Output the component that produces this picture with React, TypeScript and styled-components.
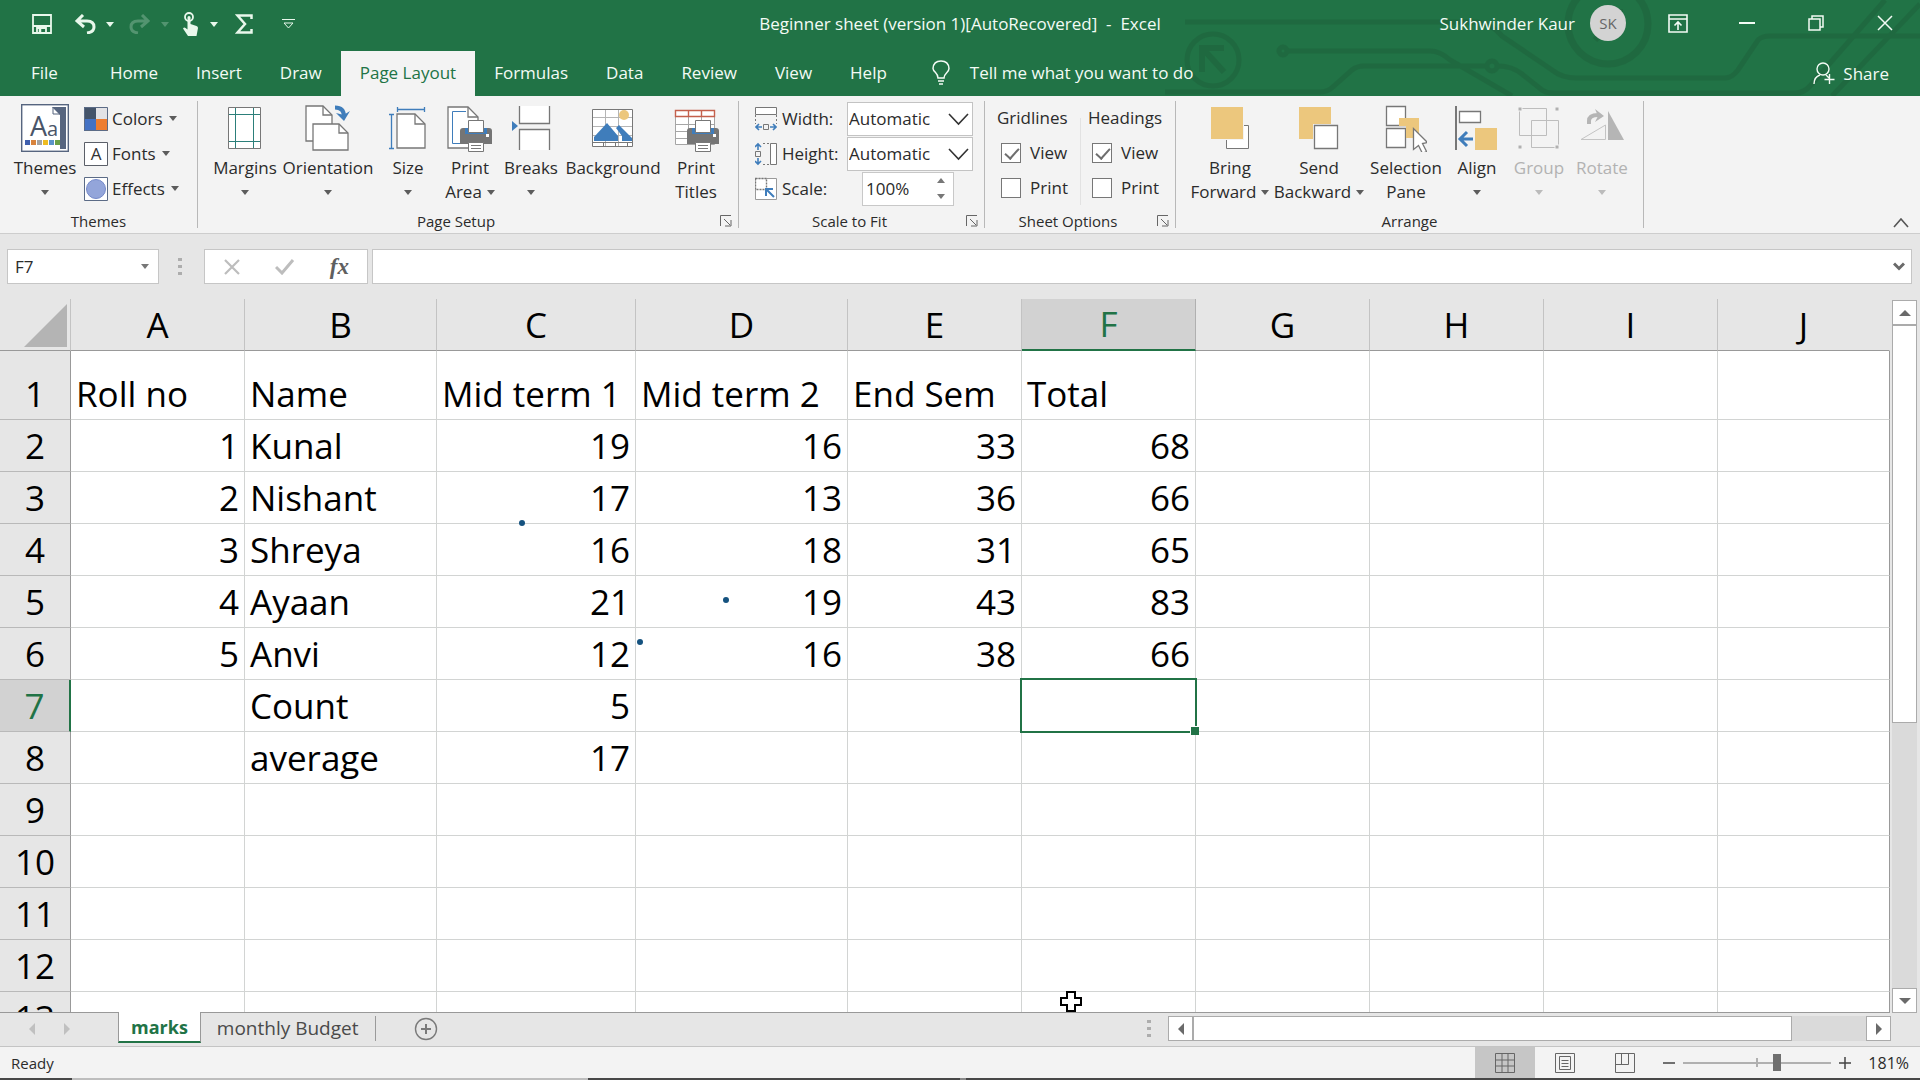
import React from "react";
import styled, { createGlobalStyle, css } from "styled-components";

const green = "#217346";
const ink = "#2b2b2b";
const grey = "#777777";
const blue = "#3f7dbb";
const gold = "#ecc77d";

const GlobalStyle = createGlobalStyle`
  * { box-sizing: border-box; }
  html, body { margin: 0; height: 100%; overflow: hidden; }
  body { font-family: "Open Sans", "Noto Sans", sans-serif; font-size: 17px; color: ${ink}; }
  button, input, select { font: inherit; color: inherit; margin: 0; padding: 0; border: 0; background: none; }
  svg { display: block; flex: none; }
`;

const Shell = styled.div`
  display: flex;
  flex-direction: column;
  height: 100vh;
  background: #e6e6e6;
`;

/* ---------- title bar and tabs ---------- */
const Banner = styled.header`
  position: relative;
  background: ${green};
  color: #f3fbf5;
`;
const Circuit = styled.svg`
  position: absolute;
  right: 0;
  top: 0;
`;
const TitleBar = styled.div`
  position: relative;
  display: grid;
  grid-template-columns: 1fr auto 1fr;
  align-items: center;
  height: 48px;
`;
const QuickAccess = styled.div`
  display: flex;
  align-items: center;
  padding-left: 32px;
`;
const QuickButton = styled.button<{ $gap: number; $dim?: boolean }>`
  display: flex;
  align-items: center;
  gap: 10px;
  margin-right: ${(p) => p.$gap}px;
  opacity: ${(p) => (p.$dim ? 0.25 : 1)};
`;
const DocTitle = styled.h1`
  margin: 0;
  padding-bottom: 2px;
  font-size: 17px;
  font-weight: 400;
  white-space: pre;
`;
const Account = styled.div`
  display: flex;
  align-items: center;
  justify-content: flex-end;
  padding: 0 1px 2px 0;
  white-space: nowrap;
`;
const Avatar = styled.span`
  display: grid;
  place-items: center;
  width: 36px;
  height: 36px;
  margin: 0 17px 0 15px;
  border-radius: 50%;
  background: #d3d3d3;
  color: #666;
  font-size: 15px;
`;
const WindowButton = styled.button`
  display: grid;
  place-items: center;
  width: 69px;
  height: 46px;
`;
const Tabs = styled.nav`
  position: relative;
  display: flex;
  align-items: flex-end;
  height: 48px;
`;
const Tab = styled.button<{ $active?: boolean; $wide?: boolean }>`
  height: 45px;
  padding: ${(p) => (p.$wide ? "0 33px 2px 31px" : "0 19px 2px")};
  white-space: nowrap;
  ${(p) => p.$active && css`background: #f3f3f3; color: ${green};`}
`;
const TellMe = styled.button`
  display: flex;
  align-items: center;
  gap: 20px;
  height: 45px;
  padding: 0 0 2px 26px;
`;
const Share = styled.button`
  display: flex;
  align-items: center;
  gap: 8px;
  height: 45px;
  margin-left: auto;
  padding-right: 31px;
`;

/* ---------- ribbon ---------- */
const Ribbon = styled.section`
  position: relative;
  display: flex;
  height: 138px;
  padding-top: 5px;
  background: #f3f3f3;
  border-bottom: 1px solid #cdcdcd;
`;
const Group = styled.div<{ $width: number }>`
  display: flex;
  flex-direction: column;
  width: ${(p) => p.$width}px;
  height: 127px;
  border-right: 1px solid #b8b8b8;
`;
const GroupBody = styled.div<{ $pad: number }>`
  display: flex;
  flex: none;
  height: 106px;
  padding-left: ${(p) => p.$pad}px;
`;
const GroupFooter = styled.div`
  display: flex;
  flex: none;
  align-items: center;
  font-size: 15px;
  line-height: 28px;
  text-align: center;
`;
const GroupTitle = styled.span`
  flex: 1;
`;
const Launcher = styled.button`
  display: grid;
  place-items: center;
  width: 24px;
`;
const BigButton = styled.button<{ $width: number }>`
  display: flex;
  flex-direction: column;
  align-items: center;
  width: ${(p) => p.$width}px;
  padding-top: 3px;
  line-height: 24px;
  white-space: nowrap;
  &:disabled { color: #b2b2b2; }
`;
const IconBox = styled.span`
  display: block;
  height: 52px;
`;
const SecondLine = styled.span`
  display: flex;
  align-items: center;
  gap: 5px;
  height: 24px;
`;
const Stack = styled.div`
  display: flex;
  flex-direction: column;
`;
const SmallButton = styled.button`
  display: flex;
  align-items: center;
  gap: 4px;
  height: 35px;
  padding-left: 4px;
  & > svg:last-child { margin-left: 2px; }
`;
const FieldRow = styled.div`
  display: flex;
  align-items: center;
  height: 35px;
`;
const FieldLabel = styled.label`
  display: flex;
  align-items: center;
  gap: 5px;
  width: 92px;
`;
const SelectBox = styled.span`
  position: relative;
  display: block;
`;
const Select = styled.select`
  appearance: none;
  width: 126px;
  height: 34px;
  padding-left: 1px;
  border: 1px solid #c3c3c3;
  background: #fff;
`;
const SelectArrow = styled.svg`
  position: absolute;
  right: 4px;
  top: 11px;
  pointer-events: none;
`;
const Spin = styled.span`
  display: flex;
  width: 92px;
  height: 34px;
  margin-left: 15px;
  border: 1px solid #c8c8c8;
  background: #fff;
`;
const SpinInput = styled.input`
  width: 65px;
  padding-left: 3px;
`;
const SpinButton = styled.button`
  display: grid;
  place-items: center;
  width: 25px;
  height: 16px;
`;
const CheckGroup = styled.fieldset<{ $width: number; $line?: boolean }>`
  width: ${(p) => p.$width}px;
  height: 104px;
  margin: 0;
  padding: 0 0 0 ${(p) => (p.$line ? 12 : 7)}px;
  border: 0;
  border-right: ${(p) => (p.$line ? "1px solid #e2e2e2" : "0")};
`;
const Legend = styled.legend`
  padding: 0;
  height: 34px;
  line-height: 34px;
`;
const Check = styled.label`
  display: flex;
  align-items: center;
  gap: 9px;
  height: 35px;
  padding-left: 4px;
`;
const CheckInput = styled.input`
  appearance: none;
  position: relative;
  width: 20px;
  height: 20px;
  border: 1px solid #777;
  background: #fff;
  &:checked::after {
    content: "";
    position: absolute;
    left: 6px;
    top: 1px;
    width: 6px;
    height: 12px;
    border: solid #6e6e6e;
    border-width: 0 2px 2px 0;
    transform: rotate(42deg);
  }
`;
const Collapse = styled.button`
  align-self: flex-end;
  margin: 0 11px 5px auto;
`;

/* ---------- formula bar ---------- */
const FormulaBar = styled.section`
  display: flex;
  align-items: center;
  height: 65px;
  padding: 0 8px 0 7px;
`;
const NameBox = styled.div`
  display: flex;
  align-items: center;
  width: 152px;
  height: 35px;
  padding: 0 9px 0 7px;
  border: 1px solid #c6c6c6;
  background: #fff;
`;
const NameInput = styled.input`
  width: 100%;
  min-width: 0;
`;
const Dots = styled.span<{ $margin: string }>`
  width: 4px;
  height: 18px;
  margin: ${(p) => p.$margin};
  background: repeating-linear-gradient(#adadad 0 3px, transparent 3px 7px);
`;
const FormulaTools = styled.div`
  display: flex;
  align-items: center;
  justify-content: space-between;
  width: 164px;
  height: 35px;
  margin-right: 4px;
  padding: 0 18px;
  border: 1px solid #c6c6c6;
  background: #fff;
`;
const FxButton = styled.button`
  font: italic 700 23px/28px "Liberation Serif", serif;
  color: #5f5f5f;
`;
const FormulaField = styled.div`
  display: flex;
  align-items: center;
  flex: 1;
  height: 35px;
  padding-right: 6px;
  border: 1px solid #c6c6c6;
  background: #fff;
`;
const FormulaInput = styled.input`
  flex: 1;
  height: 100%;
  padding-left: 6px;
`;

/* ---------- sheet ---------- */
const Workspace = styled.main`
  display: flex;
  flex: 1;
  min-height: 0;
`;
const Sheet = styled.div`
  position: relative;
  flex: 1;
  overflow: hidden;
  border-bottom: 1px solid #999;
`;
const Grid = styled.table`
  table-layout: fixed;
  width: 100%;
  border-collapse: separate;
  border-spacing: 0;
  background: #fff;
  font-size: 35px;
  line-height: 50px;
  color: #000;
`;
const ColHead = styled.th<{ $on?: boolean }>`
  height: 52px;
  padding: 0;
  font-weight: 400;
  background: ${(p) => (p.$on ? "#d2d2d2" : "#e6e6e6")};
  color: ${(p) => (p.$on ? green : "inherit")};
  border-bottom: ${(p) => (p.$on ? `2px solid ${green}` : "1px solid #999")};
  border-right: 1px solid;
  border-right-color: ${(p) => (p.$on ? "#b0b0b0" : "#c3c3c3")};
  &:last-child { border-right-color: #e6e6e6; }
`;
const Corner = styled.th`
  padding: 5px 3px 3px 24px;
  background: #e6e6e6;
  border-right: 1px solid #c3c3c3;
  border-bottom: 1px solid #999;
`;
const RowHead = styled.th<{ $on?: boolean }>`
  padding: 0;
  vertical-align: bottom;
  font-weight: 400;
  background: ${(p) => (p.$on ? "#d2d2d2" : "#e6e6e6")};
  color: ${(p) => (p.$on ? green : "inherit")};
  border-right: ${(p) => (p.$on ? `2px solid ${green}` : "1px solid #999")};
  border-bottom: 1px solid #b9b9b9;
`;
const Row = styled.tr<{ $tall?: boolean }>`
  height: ${(p) => (p.$tall ? 69 : 52)}px;
`;
const Cell = styled.td<{ $num?: boolean }>`
  position: relative;
  padding: 0 5px;
  vertical-align: bottom;
  text-align: ${(p) => (p.$num ? "right" : "left")};
  white-space: nowrap;
  border-right: 1px solid #d2d4d3;
  border-bottom: 1px solid #d2d4d3;
  &:last-child { border-right-color: #999; }
`;
const Selection = styled.div`
  position: absolute;
  inset: -2px;
  z-index: 1;
  border: 2px solid ${green};
  &::after {
    content: "";
    position: absolute;
    right: -4px;
    bottom: -4px;
    width: 8px;
    height: 8px;
    border: solid #fff;
    border-width: 1px 0 0 1px;
    background: ${green};
  }
`;
const InkDot = styled.span<{ $x: number; $y: number }>`
  position: absolute;
  left: ${(p) => p.$x}px;
  top: ${(p) => p.$y}px;
  width: 6px;
  height: 6px;
  border-radius: 50%;
  background: #15527f;
`;
const Pointer = styled.svg`
  position: absolute;
  left: 1060px;
  top: 692px;
`;

/* ---------- scroll bars ---------- */
const VScroll = styled.div`
  display: flex;
  flex-direction: column;
  width: 25px;
  margin: 1px 3px 0 2px;
  background: #dadada;
`;
const HScroll = styled.div`
  display: flex;
  width: 723px;
  height: 25px;
  margin-right: 29px;
  background: #dadada;
`;
const ScrollButton = styled.button`
  display: grid;
  place-items: center;
  flex: none;
  width: 25px;
  height: 25px;
  border: 1px solid #ababab;
  background: #fff;
`;
const Track = styled.div<{ $vertical?: boolean }>`
  display: flex;
  flex: 1;
  flex-direction: ${(p) => (p.$vertical ? "column" : "row")};
`;
const Thumb = styled.div<{ $size: number }>`
  flex: 0 0 ${(p) => p.$size}%;
  border: 1px solid #ababab;
  background: #fff;
`;

/* ---------- sheet tabs and status ---------- */
const SheetBar = styled.nav`
  display: flex;
  align-items: center;
  height: 34px;
  padding-bottom: 2px;
  border-bottom: 1px solid #c4c4c4;
`;
const SheetArrows = styled.div`
  display: flex;
  gap: 23px;
  width: 118px;
  padding-left: 26px;
`;
const SheetTab = styled.button<{ $active?: boolean }>`
  position: relative;
  align-self: flex-start;
  height: 29px;
  padding: 0 16px;
  font-size: 19px;
  line-height: 28px;
  white-space: nowrap;
  color: #4a4a4a;
  ${(p) =>
    p.$active &&
    css`
      height: 31px;
      margin-top: -1px;
      padding: 0 12px;
      font-size: 18px;
      font-weight: 700;
      color: ${green};
      background: #fff;
      border: solid #999;
      border-width: 0 1px;
      border-bottom: 2px solid ${green};
    `}
`;
const TabRule = styled.span`
  width: 1px;
  height: 25px;
  margin-right: 38px;
  background: #9a9a9a;
`;
const Spacer = styled.span`
  flex: 1;
`;
const StatusBar = styled.footer`
  display: flex;
  align-items: center;
  height: 31px;
  padding: 0 11px;
  background: #f3f3f3;
  font-size: 15px;
`;
const ViewButton = styled.button<{ $on?: boolean }>`
  display: grid;
  place-items: center;
  width: 60px;
  height: 31px;
  background: ${(p) => (p.$on ? "#c6c6c6" : "transparent")};
`;
const ZoomButton = styled.button<{ $margin: string }>`
  margin: ${(p) => p.$margin};
`;
const Zoom = styled.input`
  appearance: none;
  width: 148px;
  height: 18px;
  background:
    linear-gradient(#b0b0b0, #b0b0b0) center / 2px 9px no-repeat,
    linear-gradient(#b0b0b0, #b0b0b0) center / 100% 2px no-repeat;
  &::-webkit-slider-thumb {
    appearance: none;
    width: 8px;
    height: 17px;
    background: #6f6f6f;
  }
`;
const ZoomValue = styled.output`
  width: 58px;
  text-align: right;
  font-size: 16px;
`;
const Edge = styled.div`
  height: 2px;
  background: linear-gradient(90deg, #474747 72px, #bdbdbd 72px 588px, #474747 588px 960px, #8a8a8a 960px 966px, #474747 966px);
`;

/* ---------- icons ---------- */
const Caret = ({ color = "#5c5c5c" }: { color?: string }) => (
  <svg width="8" height="5" viewBox="0 0 8 5"><path d="M0 0h8L4 5z" fill={color} /></svg>
);

const Arrow = ({ dir, color = "#6a6a6a" }: { dir: "up" | "down" | "left" | "right"; color?: string }) => {
  const d = { up: "M0 9 6 3l6 6z", down: "M0 3h12L6 9z", left: "M9 0v12L3 6z", right: "M3 0v12l6-6z" }[dir];
  return <svg width="12" height="12" viewBox="0 0 12 12"><path d={d} fill={color} /></svg>;
};

const Page = ({ x, y, w, h, f = 9 }: { x: number; y: number; w: number; h: number; f?: number }) => (
  <g fill="#fff" stroke={grey} strokeWidth="1.3">
    <path d={`M${x} ${y}h${w - f}l${f} ${f}v${h - f}h${-w}z`} />
    <path d={`M${x + w - f} ${y}v${f}h${f}`} fill="none" />
  </g>
);

const Printer = ({ x, y }: { x: number; y: number }) => (
  <g transform={`translate(${x} ${y})`}>
    <path d="M3 8h26q3 0 3 3v13H0V11q0-3 3-3z" fill="#757575" />
    <path d="M5 8h22v6H5z" fill={blue} />
    <path d="M8.500 0.500h15v12h-15z" fill="#fff" stroke={grey} />
    <rect x="26" y="14" width="3" height="3" fill="#fff" />
    <path d="M8.500 22.500h15v9h-15z" fill="#fff" stroke={grey} />
    <path d="M11 25.500h10M11 28.500h10" stroke={grey} />
  </g>
);

const ThemesIcon = () => (
  <svg width="48" height="48" viewBox="0 0 48 48">
    <rect x="0.700" y="0.700" width="46.600" height="46.600" fill="#fff" stroke="#56657f" strokeWidth="1.400" />
    <path d="M3 3h42v42H3z" fill="#56657f" />
    <path d="M3 3h28l8 8v34H3z" fill="#fff" />
    <path d="M32 3v7h7" fill="none" stroke="#56657f" />
    <text x="9" y="32" fontSize="27" fill="#4a5568">A</text>
    <text x="26" y="32" fontSize="20" fill="#4a5568">a</text>
    {["#3f5fae", "#d8843d", "#a3a3a3", "#eebc22", "#5b93c8", "#6aa046"].map((c, i) => (
      <rect key={c} x={4 + i * 6} y="36" width="5" height="5" fill={c} />
    ))}
  </svg>
);
const ColorsIcon = () => (
  <svg width="24" height="24" viewBox="0 0 24 24">
    <path d="M0 0h12v12H0z" fill="#44546a" /><path d="M12 0h12v12H12z" fill="#e3e3e6" />
    <path d="M0 12h12v12H0z" fill="#4472c4" /><path d="M12 12h12v12H12z" fill="#ed7d31" />
    <path d="M.5.5h23v23H.5z" fill="none" stroke="#5b6b86" />
  </svg>
);
const FontsIcon = () => (
  <svg width="24" height="24" viewBox="0 0 24 24">
    <path d="M.5.5h23v23H.5z" fill="#fff" stroke="#5b5f68" />
    <text x="12" y="18" fontSize="17" textAnchor="middle" fill="#333">A</text>
  </svg>
);
const EffectsIcon = () => (
  <svg width="24" height="24" viewBox="0 0 24 24">
    <path d="M.5.5h23v23H.5z" fill="#fff" stroke="#5b6b86" />
    <circle cx="12" cy="12" r="9.500" fill="#93a5da" stroke="#7489c9" />
  </svg>
);
const MarginsIcon = () => (
  <svg width="34" height="48" viewBox="0 0 34 48">
    <path d="M.5 3.500h32v41H.5z" fill="#fff" stroke={grey} />
    <path d="M7.500 4v40M25.500 4v40M1 10.500h31M1 37.500h31" stroke="#2c7f7a" />
  </svg>
);
const OrientationIcon = () => (
  <svg width="46" height="48" viewBox="0 0 46 48">
    <Page x={1} y={2} w={26} h={35} />
    <Page x={8} y={20} w={35} h={26} />
    <path d="M30 3.500q9 0 9 9" fill="none" stroke={blue} strokeWidth="4" />
    <path d="M31 9l8 8 6-10-4 2.500-4 1z" fill={blue} />
  </svg>
);
const SizeIcon = () => (
  <svg width="38" height="48" viewBox="0 0 38 48">
    <path d="M8 5.500h28M8.500 3v5M35.500 3v5M2.500 11v33M0 10.500h5M0 44.500h5" stroke={blue} strokeWidth="1.300" />
    <Page x={8} y={10} w={28} h={34} f={10} />
  </svg>
);
const PrintAreaIcon = () => (
  <svg width="46" height="48" viewBox="0 0 46 48">
    <Page x={1} y={3} w={30} h={41} f={10} />
    <path d="M19 7.500H5.500v32H14" fill="none" stroke={blue} />
    <Printer x={13} y={16} />
  </svg>
);
const BreaksIcon = () => (
  <svg width="40" height="48" viewBox="0 0 40 48">
    <path d="M8.500 2v17.500h30V2M8.500 46V25.500h30V46" fill="#fff" stroke={grey} strokeWidth="1.300" />
    <path d="M1 17l6 5-6 5z" fill={blue} />
  </svg>
);
const BackgroundIcon = () => (
  <svg width="44" height="48" viewBox="0 0 44 48">
    <path d="M1.500 5.500h40v37h-40z" fill="#fff" stroke={grey} />
    <path d="M2 13.500h39M2 22.500h39M2 31.500h39M14.500 6v36M27.500 6v36" stroke="#b5b5b5" />
    <circle cx="33" cy="11" r="5" fill={gold} />
    <path d="M3 37V33L16 19l11 13v5z" fill={blue} /><path d="M25 24l3-3 13 13v3H31v-5z" fill={blue} />
    <path d="M12.500 38v4.500M24.500 38v4.500M36.500 38v4.500M2 38.500h39" stroke={grey} />
  </svg>
);
const PrintTitlesIcon = () => (
  <svg width="46" height="48" viewBox="0 0 46 48">
    <path d="M2.500 6.500h39v34h-39z" fill="#fff" stroke="#a5a5a5" />
    <path d="M3 20.500h38M3 27.500h38M3 34.500h38M15.500 7v33M28.500 7v33" stroke="#a5a5a5" />
    <path d="M2.500 6.500h39v6h-39zM15.500 7v6M28.500 7v6" fill="#fff" stroke="#c4604c" strokeWidth="1.400" />
    <Printer x={14} y={16} />
  </svg>
);
const BringIcon = () => (
  <svg width="40" height="48" viewBox="0 0 40 48">
    <path d="M16.500 21.500h22v23h-22z" fill="#fff" stroke={grey} />
    <path d="M0 2h34v34H0z" fill="#f3f3f3" /><path d="M1 3h32v32H1z" fill={gold} />
  </svg>
);
const SendIcon = () => (
  <svg width="40" height="48" viewBox="0 0 40 48">
    <path d="M0 3h32v32H0z" fill={gold} /><path d="M14 20h26v26H14z" fill="#f3f3f3" />
    <path d="M15.500 21.500h23v23h-23z" fill="#fff" stroke={grey} strokeWidth="1.300" />
  </svg>
);
const SelectionIcon = () => (
  <svg width="42" height="48" viewBox="0 0 42 48">
    <path d="M1.500 2.500h19v19h-19zM1.500 24.500h19v19h-19z" fill="#fff" stroke={grey} strokeWidth="1.300" />
    <path d="M14 14h20v20H21V22h-7z" fill={gold} />
    <path d="M28.500 24.500v21l5-4 4 8 4-2-4-8 5-1z" fill="#fff" stroke={grey} strokeWidth="1.300" />
  </svg>
);
const AlignIcon = () => (
  <svg width="44" height="48" viewBox="0 0 44 48">
    <path d="M1 2v44" stroke={grey} strokeWidth="2" />
    <path d="M4.500 7.500h21v11h-21z" fill="#fff" stroke={grey} strokeWidth="1.300" />
    <path d="M20 24h22v22H20z" fill={gold} />
    <path d="M18 35H6M12 28l-7 7 7 7" fill="none" stroke={blue} strokeWidth="3" />
  </svg>
);
const GroupIcon = () => (
  <svg width="44" height="48" viewBox="0 0 44 48" fill="none" stroke="#bdbdbd">
    <path d="M2.500 4.500h27v27h-27zM14.500 16.500h27v27h-27z" />
    <path d="M1 3h4v4H1zM38 3h4v4h-4zM1 41h4v4H1zM38 41h4v4h-4z" fill="#b0b0b0" stroke="#f3f3f3" />
  </svg>
);
const RotateIcon = () => (
  <svg width="44" height="48" viewBox="0 0 44 48">
    <path d="M28 7v29h16z" fill="#b5b5b5" /><path d="M1 35.500h24.500V21z" fill="none" stroke="#c4c4c4" />
    <path d="M9 20V17q0-6 9-6" fill="none" stroke="#b5b5b5" strokeWidth="4" /><path d="M15 5l9 7-9 6 3-6z" fill="#b5b5b5" />
  </svg>
);
const WidthIcon = () => (
  <svg width="22" height="24" viewBox="0 0 22 24" fill="none" stroke={grey}>
    <path d="M.5 .5h21v7H.5z" fill="#fff" /><path d="M.5 8v9M21.500 8v9" strokeDasharray="2 2" />
    <path d="M8.500 17.500h5v5h-5z" /><path d="M7 20H1M4 17l-3 3 3 3M15 20h6M18 17l3 3-3 3" stroke={blue} strokeWidth="1.600" />
  </svg>
);
const HeightIcon = () => (
  <svg width="22" height="24" viewBox="0 0 22 24" fill="none" stroke={grey}>
    <path d="M15.500 1.500h6v21h-6z" fill="#fff" /><path d="M14 1.500H6M14 22.500H6" strokeDasharray="2 2" />
    <path d="M.5 9.500h5v5h-5z" /><path d="M3 8V2M0 5l3-3 3 3M3 16v6M0 19l3 3 3-3" stroke={blue} strokeWidth="1.600" />
  </svg>
);
const ScaleIcon = () => (
  <svg width="22" height="24" viewBox="0 0 22 24" fill="none" stroke={grey}>
    <path d="M.5 1.500h21v21H.5z" fill="#fff" stroke="#9a9a9a" />
    <path d="M.5 1.500h11v11H.5z" fill="#fff" strokeDasharray="2 1" strokeWidth="1.400" />
    <path d="M19 20l-7-7M11 19v-7h7" stroke={blue} strokeWidth="2" />
  </svg>
);
const LauncherIcon = () => (
  <svg width="12" height="12" viewBox="0 0 12 12" fill="none" stroke="#666">
    <path d="M.5 11V.5H11M4 4l6 6M11 5v6H5" />
  </svg>
);

const BigTool = ({ icon, label, second, caret, width, disabled }: {
  icon: React.ReactNode; label: string; second?: string; caret?: boolean; width: number; disabled?: boolean;
}) => (
  <BigButton $width={width} disabled={disabled}>
    <IconBox>{icon}</IconBox>
    {label}
    <SecondLine>{second}{caret && <Caret color={disabled ? "#bbb" : undefined} />}</SecondLine>
  </BigButton>
);

const RibbonGroup = ({ title, width, pad, launcher, children }: {
  title: string; width: number; pad: number; launcher?: boolean; children: React.ReactNode;
}) => (
  <Group $width={width}>
    <GroupBody $pad={pad}>{children}</GroupBody>
    <GroupFooter>
      <GroupTitle>{title}</GroupTitle>
      {launcher && <Launcher aria-label={`${title} settings`}><LauncherIcon /></Launcher>}
    </GroupFooter>
  </Group>
);

const ScaleSelect = ({ id, label, icon }: { id: string; label: string; icon: React.ReactNode }) => (
  <FieldRow>
    <FieldLabel htmlFor={id}>{icon}{label}</FieldLabel>
    <SelectBox>
      <Select id={id} defaultValue="Automatic"><option>Automatic</option><option>1 page</option></Select>
      <SelectArrow width="21" height="13" viewBox="0 0 21 13"><path d="M1 1l9.500 10L20 1" fill="none" stroke="#333" strokeWidth="1.600" /></SelectArrow>
    </SelectBox>
  </FieldRow>
);

const Options = ({ name, width, line }: { name: string; width: number; line?: boolean }) => (
  <CheckGroup $width={width} $line={line}>
    <Legend>{name}</Legend>
    <Check><CheckInput type="checkbox" defaultChecked />View</Check>
    <Check><CheckInput type="checkbox" />Print</Check>
  </CheckGroup>
);

const columns = ["A", "B", "C", "D", "E", "F", "G", "H", "I", "J"];
const colWidths = [174, 192, 199, 212, 174, 174, 174, 174, 174];
const rows: (string | number)[][] = [
  ["Roll no", "Name", "Mid term 1", "Mid term 2", "End Sem", "Total"],
  [1, "Kunal", 19, 16, 33, 68],
  [2, "Nishant", 17, 13, 36, 66],
  [3, "Shreya", 16, 18, 31, 65],
  [4, "Ayaan", 21, 19, 43, 83],
  [5, "Anvi", 12, 16, 38, 66],
  ["", "Count", 5],
  ["", "average", 17],
  [], [], [], [], [],
];

export default function App() {
  return (
    <Shell>
      <GlobalStyle />
      <Banner>
        <Circuit width="780" height="96" viewBox="0 0 780 96" fill="none" stroke="#1f643d" strokeWidth="5" opacity="0.6">
          <path d="M45 22H335Q350 22 362 36L412 70Q422 78 436 78H585Q592 78 598 70L618 40Q622 36 630 36H780" />
          <path d="M148 51H290Q300 51 310 60L372 96M25 92H180Q188 92 194 86L212 70Q217 66 224 66H345M358 66Q372 66 382 74L402 90Q406 93 414 93H655Q664 93 670 86L745 0M692 96L780 4" />
          <circle cx="73" cy="60" r="26" /><circle cx="468" cy="24" r="40" strokeWidth="7" />
          <circle cx="143" cy="51" r="4" /><circle cx="352" cy="66" r="5" />
          <path d="M62 72V48H84M64 50l20 22M455 40l22-24M458 12h22v22" strokeWidth="6" />
        </Circuit>
        <TitleBar>
          <QuickAccess>
            <QuickButton $gap={22} aria-label="Save">
              <svg width="20" height="20" viewBox="0 0 20 20" fill="none" stroke="#e9f8ec" strokeWidth="1.800">
                <path d="M1 1h18v18H1zM1.500 12h17M5 19v-5h9v5" /><path d="M8 15v4" strokeWidth="2.500" />
              </svg>
            </QuickButton>
            <QuickButton $gap={15} aria-label="Undo">
              <svg width="22" height="20" viewBox="0 0 22 20" fill="none" stroke="#e9f8ec" strokeWidth="3">
                <path d="M9 1L3 7l7 6M3 7h10q7 0 7 6 0 5-7 6" />
              </svg>
              <Caret color="#e9f8ec" />
            </QuickButton>
            <QuickButton $gap={13} $dim aria-label="Redo">
              <svg width="22" height="20" viewBox="0 0 22 20" fill="none" stroke="#e9f8ec" strokeWidth="3">
                <path d="M13 1l6 6-7 6M19 7H9Q2 7 2 13q0 5 7 6" />
              </svg>
              <Caret color="#e9f8ec" />
            </QuickButton>
            <QuickButton $gap={17} aria-label="Touch mode">
              <svg width="18" height="24" viewBox="0 0 18 24">
                <circle cx="7" cy="5" r="4" fill="none" stroke="#e9f8ec" strokeWidth="1.800" />
                <path d="M5.500 5q1.500-2 3 0v7l6 2q1.500.5 1.500 2L14.500 24H6L1 16.500q1-1.500 2.500-.5l2 1.500z" fill="#e9f8ec" />
              </svg>
              <Caret color="#e9f8ec" />
            </QuickButton>
            <QuickButton $gap={29} aria-label="AutoSum">
              <svg width="18" height="20" viewBox="0 0 18 20" fill="none" stroke="#e9f8ec" strokeWidth="2.500">
                <path d="M16.500 5V1.500H2.500L10 10l-7.500 8.500h14V15" />
              </svg>
            </QuickButton>
            <QuickButton $gap={0} aria-label="Customize toolbar">
              <svg width="13" height="10" viewBox="0 0 13 10" fill="none" stroke="#e9f8ec"><path d="M0 .5h13M2 4l4.500 5L11 4z" /></svg>
            </QuickButton>
          </QuickAccess>
          <DocTitle>{"Beginner sheet (version 1)[AutoRecovered]  -  Excel"}</DocTitle>
          <Account>
            Sukhwinder Kaur
            <Avatar>SK</Avatar>
            <WindowButton aria-label="Ribbon display options">
              <svg width="20" height="19" viewBox="0 0 20 19" fill="none" stroke="#f3fbf5" strokeWidth="1.600"><path d="M1 1h18v17H1zM1 5h18M10 16V8M6.500 11.500L10 8l3.500 3.500" /></svg>
            </WindowButton>
            <WindowButton aria-label="Minimize">
              <svg width="16" height="2" viewBox="0 0 16 2"><path d="M0 0h16v2H0z" fill="#f3fbf5" /></svg>
            </WindowButton>
            <WindowButton aria-label="Restore">
              <svg width="16" height="16" viewBox="0 0 16 16" fill="none" stroke="#f3fbf5" strokeWidth="1.500"><path d="M1 4h11v11H1zM4 4V1h11v11h-3" /></svg>
            </WindowButton>
            <WindowButton aria-label="Close">
              <svg width="16" height="16" viewBox="0 0 16 16" fill="none" stroke="#f3fbf5" strokeWidth="1.500"><path d="M1 1l14 14M15 1L1 15" /></svg>
            </WindowButton>
          </Account>
        </TitleBar>
        <Tabs>
          <Tab $wide>File</Tab>
          {["Home", "Insert", "Draw", "Page Layout", "Formulas", "Data", "Review", "View", "Help"].map((t) => (
            <Tab key={t} $active={t === "Page Layout"}>{t}</Tab>
          ))}
          <TellMe>
            <svg width="18" height="25" viewBox="0 0 18 25" fill="none" stroke="#f3fbf5" strokeWidth="1.500">
              <path d="M6 18q0-3-2.500-5.500T1 8.500Q1.500 1 9 1t8 7.500q0 2-2.500 4.500T12 18zM6 21h6M7 24h4" />
            </svg>
            Tell me what you want to do
          </TellMe>
          <Share>
            <svg width="22" height="23" viewBox="0 0 22 23" fill="none" stroke="#f3fbf5" strokeWidth="1.400">
              <circle cx="10" cy="7" r="6" /><path d="M1 22q0-7 6-9M13 13l3 3M16.500 12v10M11.500 17.500h10" />
            </svg>
            Share
          </Share>
        </Tabs>
      </Banner>

      <Ribbon>
        <RibbonGroup title="Themes" width={198} pad={10}>
          <BigTool icon={<ThemesIcon />} label="Themes" width={70} caret />
          <Stack>
            <SmallButton><ColorsIcon />Colors<Caret /></SmallButton>
            <SmallButton><FontsIcon />Fonts<Caret /></SmallButton>
            <SmallButton><EffectsIcon />Effects<Caret /></SmallButton>
          </Stack>
        </RibbonGroup>
        <RibbonGroup title="Page Setup" width={541} pad={12} launcher>
          <BigTool icon={<MarginsIcon />} label="Margins" width={70} caret />
          <BigTool icon={<OrientationIcon />} label="Orientation" width={96} caret />
          <BigTool icon={<SizeIcon />} label="Size" width={64} caret />
          <BigTool icon={<PrintAreaIcon />} label="Print" second="Area" width={60} caret />
          <BigTool icon={<BreaksIcon />} label="Breaks" width={62} caret />
          <BigTool icon={<BackgroundIcon />} label="Background" width={102} />
          <BigTool icon={<PrintTitlesIcon />} label="Print" second="Titles" width={64} />
        </RibbonGroup>
        <RibbonGroup title="Scale to Fit" width={246} pad={16} launcher>
          <Stack>
            <ScaleSelect id="fit-width" label="Width:" icon={<WidthIcon />} />
            <ScaleSelect id="fit-height" label="Height:" icon={<HeightIcon />} />
            <FieldRow>
              <FieldLabel htmlFor="fit-scale"><ScaleIcon />Scale:</FieldLabel>
              <Spin>
                <SpinInput id="fit-scale" defaultValue="100%" />
                <Stack>
                  <SpinButton aria-label="Increase scale"><svg width="8" height="5" viewBox="0 0 8 5"><path d="M0 5h8L4 0z" fill="#777" /></svg></SpinButton>
                  <SpinButton aria-label="Decrease scale"><Caret color="#777" /></SpinButton>
                </Stack>
              </Spin>
            </FieldRow>
          </Stack>
        </RibbonGroup>
        <RibbonGroup title="Sheet Options" width={191} pad={0} launcher>
          <Options name="Gridlines" width={96} line />
          <Options name="Headings" width={94} />
        </RibbonGroup>
        <RibbonGroup title="Arrange" width={468} pad={10}>
          <BigTool icon={<BringIcon />} label="Bring" second="Forward" width={88} caret />
          <BigTool icon={<SendIcon />} label="Send" second="Backward" width={90} caret />
          <BigTool icon={<SelectionIcon />} label="Selection" second="Pane" width={84} />
          <BigTool icon={<AlignIcon />} label="Align" width={58} caret />
          <BigTool icon={<GroupIcon />} label="Group" width={66} caret disabled />
          <BigTool icon={<RotateIcon />} label="Rotate" width={60} caret disabled />
        </RibbonGroup>
        <Collapse aria-label="Collapse ribbon">
          <svg width="16" height="10" viewBox="0 0 16 10" fill="none" stroke="#555" strokeWidth="1.600"><path d="M1 9l7-8 7 8" /></svg>
        </Collapse>
      </Ribbon>

      <FormulaBar>
        <NameBox><NameInput aria-label="Name box" defaultValue="F7" /><Caret color="#777" /></NameBox>
        <Dots $margin="0 22px 0 19px" />
        <FormulaTools>
          <button aria-label="Cancel"><svg width="18" height="16" viewBox="0 0 18 16" fill="none" stroke="#bdbdbd" strokeWidth="2.200"><path d="M2 1l14 14M16 1L2 15" /></svg></button>
          <button aria-label="Enter"><svg width="20" height="16" viewBox="0 0 20 16" fill="none" stroke="#bdbdbd" strokeWidth="3"><path d="M1 8l6 6L18 1" /></svg></button>
          <FxButton aria-label="Insert function">fx</FxButton>
        </FormulaTools>
        <FormulaField>
          <FormulaInput aria-label="Formula" />
          <svg width="12" height="9" viewBox="0 0 12 9" fill="none" stroke="#6a6a6a" strokeWidth="3"><path d="M1 1.500l5 5 5-5" /></svg>
        </FormulaField>
      </FormulaBar>

      <Workspace>
        <Sheet>
          <Grid>
            <colgroup>
              <col width="71" />
              {colWidths.map((w, i) => <col key={i} width={w} />)}
              <col />
            </colgroup>
            <thead>
              <tr>
                <Corner aria-label="Select all"><svg width="43" height="43" viewBox="0 0 43 43"><path d="M43 0v43H0z" fill="#b4b4b4" /></svg></Corner>
                {columns.map((c) => <ColHead key={c} $on={c === "F"}>{c}</ColHead>)}
              </tr>
            </thead>
            <tbody>
              {rows.map((r, i) => (
                <Row key={i} $tall={i === 0}>
                  <RowHead $on={i === 6}>{i + 1}</RowHead>
                  {columns.map((c, j) => (
                    <Cell key={c} $num={typeof r[j] === "number"}>
                      {r[j]}
                      {i === 6 && c === "F" && <Selection />}
                    </Cell>
                  ))}
                </Row>
              ))}
            </tbody>
          </Grid>
          <InkDot $x={519} $y={221} />
          <InkDot $x={723} $y={298} />
          <InkDot $x={637} $y={340} />
          <Pointer width="22" height="22" viewBox="0 0 22 22"><path d="M7 1h8v6h6v7h-6v6H7v-6H1V7h6z" fill="#fff" stroke="#000" strokeWidth="2" /></Pointer>
        </Sheet>
        <VScroll>
          <ScrollButton aria-label="Scroll up"><Arrow dir="up" /></ScrollButton>
          <Track $vertical><Thumb $size={60} /></Track>
          <ScrollButton aria-label="Scroll down"><Arrow dir="down" /></ScrollButton>
        </VScroll>
      </Workspace>

      <SheetBar>
        <SheetArrows>
          <button aria-label="Previous sheet"><Arrow dir="left" color="#c0c0c0" /></button>
          <button aria-label="Next sheet"><Arrow dir="right" color="#c0c0c0" /></button>
        </SheetArrows>
        <SheetTab $active>marks</SheetTab>
        <SheetTab>monthly Budget</SheetTab>
        <TabRule />
        <button aria-label="New sheet">
          <svg width="24" height="24" viewBox="0 0 24 24" fill="none" stroke="#7a7a7a" strokeWidth="1.400"><circle cx="12" cy="12" r="10.500" /><path d="M12 7v10M7 12h10" strokeWidth="2" /></svg>
        </button>
        <Spacer />
        <Dots $margin="0 17px 0 0" />
        <HScroll>
          <ScrollButton aria-label="Scroll left"><Arrow dir="left" /></ScrollButton>
          <Track><Thumb $size={89} /></Track>
          <ScrollButton aria-label="Scroll right"><Arrow dir="right" /></ScrollButton>
        </HScroll>
      </SheetBar>

      <StatusBar>
        Ready
        <Spacer />
        <ViewButton $on aria-label="Normal view">
          <svg width="20" height="20" viewBox="0 0 20 20" fill="none" stroke="#666"><path d="M.5.5h19v19H.5zM.5 7h19M.5 13h19M7 .5v19M13 .5v19" /></svg>
        </ViewButton>
        <ViewButton aria-label="Page layout view">
          <svg width="20" height="20" viewBox="0 0 20 20" fill="none" stroke="#666"><path d="M.5.5h19v19H.5zM4.500 3.500h11v13h-11zM6.500 7.500h7M6.500 10.500h7M6.500 13.500h7" /></svg>
        </ViewButton>
        <ViewButton aria-label="Page break preview">
          <svg width="20" height="20" viewBox="0 0 20 20" fill="none" stroke="#666"><path d="M.5.5h19v19H.5zM6.500 0v11.500M.5 11.500h13V0" /></svg>
        </ViewButton>
        <ZoomButton $margin="0 8px 0 8px" aria-label="Zoom out">
          <svg width="12" height="12" viewBox="0 0 12 12" stroke="#444" strokeWidth="1.500"><path d="M0 6h12" /></svg>
        </ZoomButton>
        <Zoom type="range" aria-label="Zoom" min={0} max={100} defaultValue={64} />
        <ZoomButton $margin="0 0 0 8px" aria-label="Zoom in">
          <svg width="12" height="12" viewBox="0 0 12 12" stroke="#444" strokeWidth="1.500"><path d="M0 6h12M6 0v12" /></svg>
        </ZoomButton>
        <ZoomValue>181%</ZoomValue>
      </StatusBar>
      <Edge />
    </Shell>
  );
}
